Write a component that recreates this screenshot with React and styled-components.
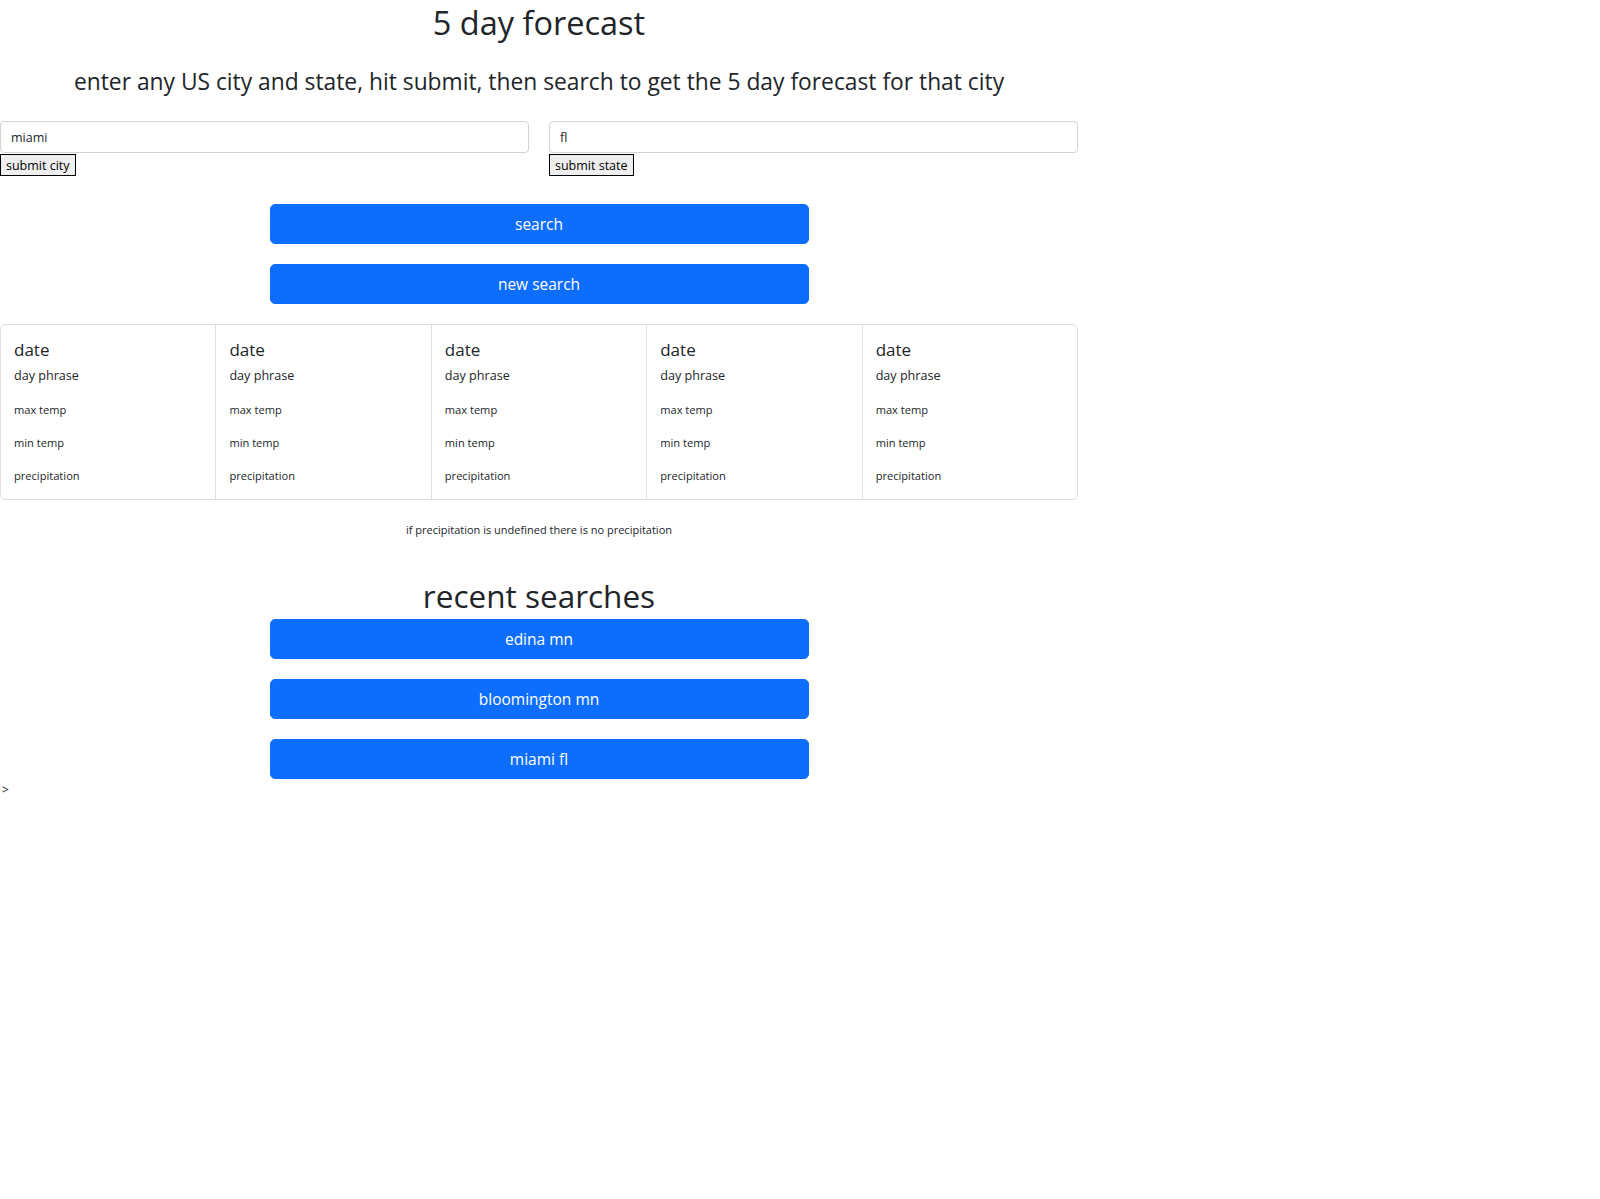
import React from 'react';
import styled, { createGlobalStyle } from 'styled-components';

const GlobalStyle = createGlobalStyle`
  body {
    margin: 0;
    background: #fff;
    color: #212529;
    font-family: "Open Sans", "Noto Sans", sans-serif;
  }
`;

const Page = styled.div`
  width: 1078px;
  display: flex;
  flex-direction: column;
`;

const Title = styled.h1`
  margin: 3px 0 0;
  font-size: 32.5px;
  font-weight: 500;
  line-height: 1.2;
  text-align: center;
`;

const Subtitle = styled.h4`
  margin: 26px 0 0;
  font-size: 22.8px;
  font-weight: 500;
  line-height: 1.2;
  text-align: center;
`;

const InputRow = styled.div`
  display: grid;
  grid-template-columns: 1fr 1fr;
  gap: 20px;
  margin-top: 26px;
`;

const Field = styled.div`
  display: flex;
  flex-direction: column;
  align-items: flex-start;
`;

const TextInput = styled.input`
  box-sizing: border-box;
  width: 100%;
  height: 32px;
  padding: 4px 10px;
  border: 1px solid #ced4da;
  border-radius: 4px;
  font-family: inherit;
  font-size: 12.5px;
  color: #212529;
  outline: none;
`;

const PlainButton = styled.button`
  box-sizing: border-box;
  height: 22px;
  margin-top: 1px;
  padding: 0 5px;
  border: 1px solid #000;
  border-radius: 0;
  background: #efefef;
  font-family: inherit;
  font-size: 12.5px;
  color: #000;
`;

const Actions = styled.div`
  display: flex;
  flex-direction: column;
  align-items: center;
  gap: 20px;
  margin-top: ${props => props.top}px;
`;

const BlueButton = styled.button`
  width: 539px;
  height: 40px;
  border: 1px solid #0d6efd;
  border-radius: 5px;
  background: #0d6efd;
  color: #fff;
  font-family: inherit;
  font-size: 15.5px;
  line-height: 24px;
`;

const CardGroup = styled.div`
  display: flex;
  margin-top: 20px;
  border: 1px solid #dfdfdf;
  border-radius: 5px;
`;

const Card = styled.div`
  flex: 1;
  padding: 14px 13px;
  & + & {
    border-left: 1px solid #dfdfdf;
  }
`;

const CardTitle = styled.h5`
  margin: 0 0 5px;
  font-size: 17px;
  font-weight: 500;
  line-height: 21px;
`;

const Phrase = styled.p`
  margin: 0 0 14px;
  font-size: 12.6px;
  line-height: 21px;
`;

const Stat = styled.p`
  margin: 0 0 14px;
  font-size: 11.1px;
  line-height: 19px;
  &:last-child {
    margin-bottom: 0;
  }
`;

const Note = styled.p`
  margin: 21px 0 0;
  font-size: 11px;
  line-height: 18px;
  text-align: center;
`;

const RecentTitle = styled.h2`
  margin: 38px 0 0;
  font-size: 31.5px;
  font-weight: 500;
  line-height: 1.2;
  text-align: center;
`;

const Caret = styled.div`
  margin: 3px 0 0 2px;
  font-size: 12px;
  line-height: 16px;
`;

const days = [1, 2, 3, 4, 5];
const recent = ['edina mn', 'bloomington mn', 'miami fl'];

export default function App() {
  return (
    <>
      <GlobalStyle />
      <Page>
        <Title>5 day forecast</Title>
        <Subtitle>
          enter any US city and state, hit submit, then search to get the 5 day forecast for that city
        </Subtitle>
        <InputRow>
          <Field>
            <TextInput defaultValue="miami" />
            <PlainButton>submit city</PlainButton>
          </Field>
          <Field>
            <TextInput defaultValue="fl" />
            <PlainButton>submit state</PlainButton>
          </Field>
        </InputRow>
        <Actions top={28}>
          <BlueButton>search</BlueButton>
          <BlueButton>new search</BlueButton>
        </Actions>
        <CardGroup>
          {days.map(d => (
            <Card key={d}>
              <CardTitle>date</CardTitle>
              <Phrase>day phrase</Phrase>
              <Stat>max temp</Stat>
              <Stat>min temp</Stat>
              <Stat>precipitation</Stat>
            </Card>
          ))}
        </CardGroup>
        <Note>if precipitation is undefined there is no precipitation</Note>
        <RecentTitle>recent searches</RecentTitle>
        <Actions top={4}>
          {recent.map(r => (
            <BlueButton key={r}>{r}</BlueButton>
          ))}
        </Actions>
        <Caret>&gt;</Caret>
      </Page>
    </>
  );
}
